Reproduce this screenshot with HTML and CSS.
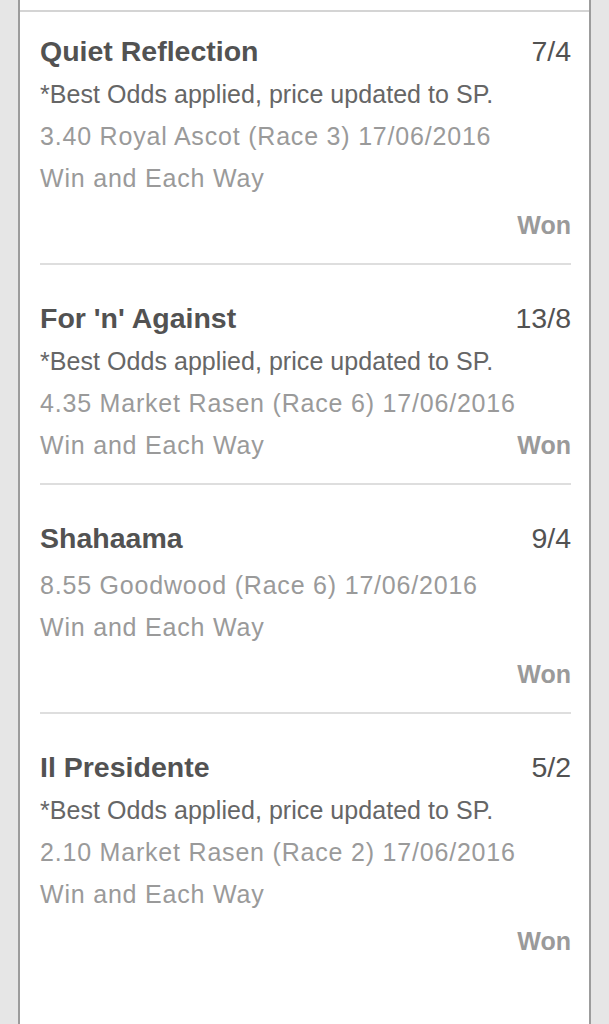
FILE: index.html
```html
<html lang="en">
<head>
<meta charset="utf-8">
<title>Settled Bets</title>
<link rel="stylesheet" href="styles.css">
</head>
<body>
    <div class="card">
        <div class="card-top"></div>

        <div class="bet bet-first">
            <div class="bet-head">
                <span class="bet-name">Quiet Reflection</span>
                <span class="bet-price">7/4</span>
            </div>
            <div class="bet-note">*Best Odds applied, price updated to SP.</div>
            <div class="bet-line">3.40 Royal Ascot (Race 3) 17/06/2016</div>
            <div class="bet-line">Win and Each Way</div>
            <div class="bet-result">Won</div>
        </div>

        <div class="bet">
            <div class="bet-head">
                <span class="bet-name">For 'n' Against</span>
                <span class="bet-price">13/8</span>
            </div>
            <div class="bet-note">*Best Odds applied, price updated to SP.</div>
            <div class="bet-line">4.35 Market Rasen (Race 6) 17/06/2016</div>
            <div class="bet-line bet-row">
                <span>Win and Each Way</span>
                <span class="bet-result-inline">Won</span>
            </div>
        </div>

        <div class="bet">
            <div class="bet-head">
                <span class="bet-name">Shahaama</span>
                <span class="bet-price">9/4</span>
            </div>
            <div class="bet-line bet-line-first">8.55 Goodwood (Race 6) 17/06/2016</div>
            <div class="bet-line">Win and Each Way</div>
            <div class="bet-result">Won</div>
        </div>

        <div class="bet bet-last">
            <div class="bet-head">
                <span class="bet-name">Il Presidente</span>
                <span class="bet-price">5/2</span>
            </div>
            <div class="bet-note">*Best Odds applied, price updated to SP.</div>
            <div class="bet-line">2.10 Market Rasen (Race 2) 17/06/2016</div>
            <div class="bet-line">Win and Each Way</div>
            <div class="bet-result">Won</div>
        </div>
    </div>
</body>
</html>
```

FILE: styles.css
```css
body{
    margin: 0;
    background: #e6e6e6;
    font-family: "Liberation Sans", Arial, sans-serif;
}
.card{
    margin: 0 18px;
    min-height: 100vh;
    background: #fff;
    border-left: 2px solid #9c9c9c;
    border-right: 2px solid #9c9c9c;
}
.card-top{
    height: 10px;
    border-bottom: 2px solid #d4d4d4;
}
.bet{
    margin: 0 18px 0 20px;
    padding: 31px 0 17px;
    border-bottom: 2px solid #dedede;
}
.bet-first{
    padding-top: 17px;
}
.bet-last{
    border-bottom: none;
}
.bet-head{
    display: flex;
    justify-content: space-between;
    font-size: 28.5px;
    line-height: 44px;
    color: #525252;
}
.bet-name{
    font-weight: bold;
}
.bet-note{
    font-size: 25px;
    line-height: 42px;
    color: #666;
    letter-spacing: 0.05px;
}
.bet-line{
    font-size: 25px;
    line-height: 42px;
    color: #9a9a9a;
    letter-spacing: 0.8px;
}
.bet-line-first{
    margin-top: 4px;
}
.bet-row{
    display: flex;
    justify-content: space-between;
}
.bet-result, .bet-result-inline{
    font-size: 25px;
    line-height: 42px;
    font-weight: bold;
    color: #9a9a9a;
    text-align: right;
    letter-spacing: 0;
}
.bet-result{
    margin-top: 5px;
}
```
